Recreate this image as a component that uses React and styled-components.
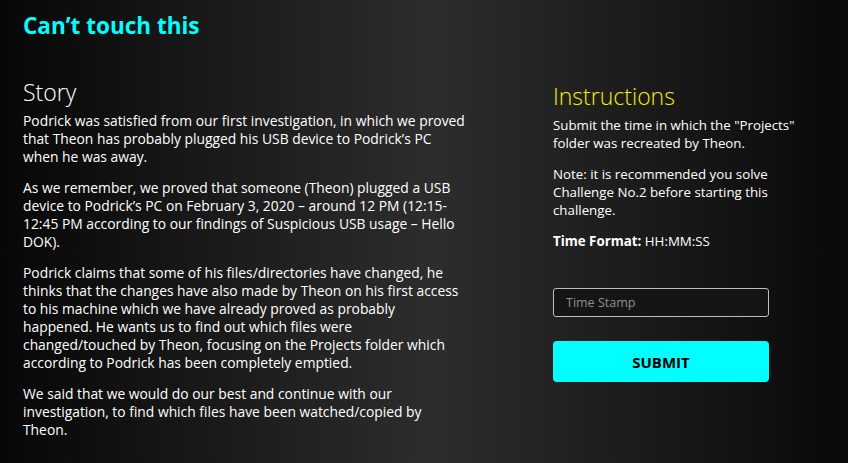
import React from "react";
import styled, { createGlobalStyle } from "styled-components";

const GlobalStyle = createGlobalStyle`
  html, body {
    margin: 0;
    padding: 0;
  }
  body {
    background: #111;
    font-family: "Open Sans", "Noto Sans", sans-serif;
  }
`;

const Page = styled("div")`
  width: 848px;
  height: 463px;
  box-sizing: border-box;
  padding: 12px 23px 0;
  background: linear-gradient(90deg, #070707 0%, #2d2d2d 51%, #090909 100%);
  color: #fff;
  overflow: hidden;
`;

const Title = styled("h1")`
  margin: 0;
  color: #00ffff;
  font-size: 22.5px;
  font-weight: 700;
  line-height: 28px;
`;

const Columns = styled("div")`
  display: grid;
  grid-template-columns: 443px 260px;
  column-gap: 87px;
  margin-top: 38px;
`;

const Column = styled("div")`
  display: flex;
  flex-direction: column;
  padding-top: ${(p) => p.offset || 0}px;
`;

const Heading = styled("h2")`
  margin: 0 0 6px;
  font-size: 23px;
  font-weight: 300;
  line-height: 28px;
  color: ${(p) => p.color || "#fff"};
`;

const Paragraph = styled("p")`
  margin: 0 0 13px;
  font-size: ${(p) => p.size || 13.3}px;
  line-height: 18px;
  color: #fff;
`;

const Strong = styled("b")`
  font-weight: 700;
`;

const Input = styled("input")`
  box-sizing: border-box;
  width: 216px;
  height: 29px;
  margin-top: 25px;
  padding: 0 12px;
  background: #151515;
  border: 1px solid #bdbdbd;
  border-radius: 3px;
  color: #fff;
  font-family: inherit;
  font-size: 12.5px;
  outline: none;
  &::placeholder {
    color: #8f8f8f;
  }
`;

const Button = styled("button")`
  width: 216px;
  height: 41px;
  margin-top: 24px;
  border: none;
  border-radius: 4px;
  background: #00ffff;
  color: #000;
  font-family: inherit;
  font-size: 15px;
  font-weight: 700;
  cursor: pointer;
`;

const storySize = 13.85;

const App = () => {
  return (
    <Page>
      <GlobalStyle />
      <Title>Can’t touch this</Title>
      <Columns>
        <Column>
          <Heading>Story</Heading>
          <Paragraph size={storySize}>
            Podrick was satisfied from our first investigation, in which we proved that Theon has
            probably plugged his USB device to Podrick’s PC when he was away.
          </Paragraph>
          <Paragraph size={storySize}>
            As we remember, we proved that someone (Theon) plugged a USB device to Podrick’s PC on
            February 3, 2020 – around 12 PM (12:15-12:45 PM according to our findings of Suspicious
            USB usage – Hello DOK).
          </Paragraph>
          <Paragraph size={storySize}>
            Podrick claims that some of his files/directories have changed, he thinks that the changes
            have also made by Theon on his first access to his machine which we have already proved as
            probably happened. He wants us to find out which files were changed/touched by Theon,
            focusing on the Projects folder which according to Podrick has been completely emptied.
          </Paragraph>
          <Paragraph size={storySize}>
            We said that we would do our best and continue with our investigation, to find which files
            have been watched/copied by Theon.
          </Paragraph>
        </Column>
        <Column offset={4}>
          <Heading color="#f0f000">Instructions</Heading>
          <Paragraph>
            Submit the time in which the "Projects" folder was recreated by Theon.
          </Paragraph>
          <Paragraph>
            Note: it is recommended you solve Challenge No.2 before starting this challenge.
          </Paragraph>
          <Paragraph>
            <Strong>Time Format:</Strong> HH:MM:SS
          </Paragraph>
          <Input placeholder="Time Stamp" />
          <Button>SUBMIT</Button>
        </Column>
      </Columns>
    </Page>
  );
};

export default App;
